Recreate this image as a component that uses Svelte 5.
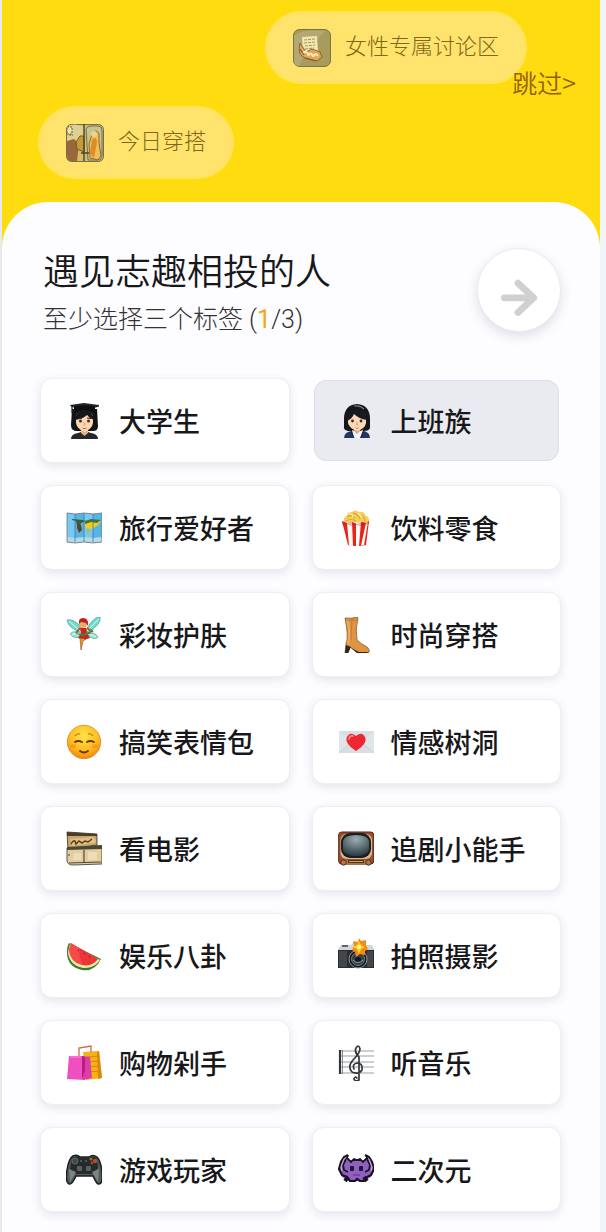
<script>
	const tags = [
		{ icon: 'student', name: '大学生' },
		{ icon: 'office', name: '上班族' },
		{ icon: 'map', name: '旅行爱好者' },
		{ icon: 'popcorn', name: '饮料零食' },
		{ icon: 'fairy', name: '彩妆护肤' },
		{ icon: 'boot', name: '时尚穿搭' },
		{ icon: 'smile', name: '搞笑表情包' },
		{ icon: 'letter', name: '情感树洞' },
		{ icon: 'clapper', name: '看电影' },
		{ icon: 'tv', name: '追剧小能手' },
		{ icon: 'melon', name: '娱乐八卦' },
		{ icon: 'camera', name: '拍照摄影' },
		{ icon: 'bags', name: '购物剁手' },
		{ icon: 'music', name: '听音乐' },
		{ icon: 'gamepad', name: '游戏玩家' },
		{ icon: 'monster', name: '二次元' }
	];

	let selected = $state(['office']);

	function toggle(icon) {
		if (selected.includes(icon)) {
			selected = selected.filter((item) => item !== icon);
		} else {
			selected = [...selected, icon];
		}
	}
</script>

{#snippet drawing(icon)}
	<svg class="icon" viewBox="0 0 36 36" aria-hidden="true">
		{#if icon === 'student'}
			<path d="M6 6h25l1 17q0 5-5 5H11q-6 0-6-6z" fill="#111417" />
			<path d="M5 36q0-5 7-6l3-1h7l3 1q7 1 7 6z" fill="#26272b" />
			<path d="M15 26h7v4l-3.500 3-3.500-3z" fill="#e9b183" />
			<path d="M10 14q0-5 8.500-5T27 14v6q-1 6-8.500 9Q11 26 10 20z" fill="#fbd7b2" />
			<path d="M9 17q0-8 9-9 9 0 10 9-4-1-7-5-4 4-12 5" fill="#15181b" />
			<path d="M4 2l14-2 15 2v1.500L18 8 5 3.500z" fill="#202327" />
			<path d="M8 3.500q10-2 21 0v5q-10-3-21 0z" fill="#0d1013" />
			<path d="M6 3v7" stroke="#222" stroke-width="1.200" />
			<path d="M12 15.500l4-.5M21 15l4 .5" stroke="#3b2116" stroke-width="1" />
			<circle cx="14.500" cy="18" r="1.500" fill="#5c2417" />
			<circle cx="22.500" cy="18" r="1.500" fill="#5c2417" />
			<path d="M18 19l1 3h-1.500" stroke="#d98f60" stroke-width=".8" fill="none" />
			<path d="M16 24.500q2.500 1.500 5 0-2.500 3-5 0" fill="#d62b2b" />
		{:else if icon === 'office'}
			<path d="M6 16Q6 2 19 1q13 1 13 15v9q-1 3-6 3H10q-5-1-4-5z" fill="#14171c" />
			<path d="M6 35q0-6 8-7l5 2 6-2q7 1 7 7z" fill="#26375f" />
			<path d="M14 27l5 2 6-2-3 8h-6z" fill="#f3f5fa" />
			<path d="M16 25h6v3l-3 3-3-3z" fill="#e3a67b" />
			<path d="M10 15q0-7 9-7t9 7v5q-1 6-9 8-8-3-9-8z" fill="#fbd9b9" />
			<path d="M9 18Q9 6 20 6q8 1 9 11-8-1-13-6-2 5-7 7" fill="#171a20" />
			<path d="M16 3q6-1 10 3" stroke="#777b82" stroke-width="1.200" fill="none" />
			<circle cx="14.500" cy="18" r="1.400" fill="#4c2118" />
			<circle cx="23" cy="18" r="1.400" fill="#4c2118" />
			<path d="M19 19v3h1" stroke="#d18b62" stroke-width=".8" fill="none" />
			<path d="M16.500 24q2.500 2 5 0-2.500 3-5 0" fill="#cd382d" />
			<path d="M13 28l3 7M26 28l-3 7" stroke="#152342" stroke-width="1" />
		{:else if icon === 'map'}
			<path d="M1 3l8 1 9-1 9 1 9-1v29l-9 1-9-1-9 1-8-1z" fill="#58b4e5" />
			<path d="M1 3l8 1v29l-8-1zM18 3l9 1v29l-9-1z" fill="#79c8f0" />
			<path d="M1 27l8 1 9-1 9 1 9-1v5l-9 1-9-1-9 1-8-1z" fill="#b7d9e7" />
			<path d="M6 9l11 1 3 1-5 2-1 3-3-1-1-4-4-1z" fill="#3f5c38" />
			<path d="M11 14l4 1 1 5-3 3-2-5z" fill="#5b4321" />
			<path d="M18 13l6-3 11 1-3 4-6 4-6-1z" fill="#f0cc22" />
			<path d="M19 11l6-2 10 1-4 3-6-1-6 2z" fill="#43733b" />
			<path d="M20 19l4 1-2 5z" fill="#bdbb44" />
			<path d="M9 4v28M18 3v29M27 4v28" stroke="#326f9e" stroke-width=".7" />
			<path d="M1 3l8 1 9-1 9 1 9-1v29l-9 1-9-1-9 1-8-1z" fill="none" stroke="#68777d" stroke-width=".8" />
		{:else if icon === 'popcorn'}
			<path d="M6 12Q5 7 9 6q0-4 5-4 3-3 7 0 5-1 6 3 5 2 4 8z" fill="#f5cf57" />
			<path d="M9 7q4-3 8 1M15 3q5 1 7 6M23 5q4 2 4 6M8 11q5-3 10 0" stroke="#d9a13a" stroke-width="1.200" fill="none" />
			<path d="M11 4q3 0 4 3M20 3l4 4" stroke="#fff0a1" stroke-width="1.500" />
			<path d="M4 11l5 2 5-1 5 2 5-2 4 1 3-2-3 24q-10 2-18 0z" fill="#e3251f" />
			<path d="M9 13l5-1 1 24-4-.5zM18 14l5-2-2 24h-3zM28 13l2-1-4 23-3 .5z" fill="#fff8f3" />
			<path d="M4 11l5 2 5-1 5 2 5-2 4 1 3-2-1 4-3-1-4 2-5-1-5 1-5-2-4 1z" fill="#b91518" opacity=".3" />
		{:else if icon === 'fairy'}
			<path d="M17 13Q9 1 1 3q1 8 15 13zM20 13Q28-1 34 0q2 8-13 15z" fill="#74dacb" stroke="#4aac9f" stroke-width=".8" />
			<path d="M16 16Q6 13 4 17q4 6 12 2zM20 16q10-1 12 4-2 4-12-2z" fill="#94e5d6" stroke="#54ac9b" stroke-width=".7" />
			<path d="M3 4l12 11M33 2L21 14M6 17l10-1M30 20l-9-4" stroke="#f3fff4" stroke-width=".8" />
			<path d="M14 11l-4 5M21 11l6 4" stroke="#a85b20" stroke-width="2" />
			<circle cx="17" cy="7" r="4" fill="#f4aa65" />
			<path d="M13 7q-1-6 4-6 6 0 5 8l-2-3-5-1z" fill="#b72320" />
			<path d="M14 11h6l1 5 3 5-6 2-6-2 3-5z" fill="#d1221e" />
			<path d="M9 16l9 1 10-5-4 5-8 2z" fill="#3a8d48" />
			<path d="M14 21l1 12 2-9 3-2z" fill="#ef9a31" stroke="#7e481a" stroke-width=".6" />
		{:else if icon === 'boot'}
			<path d="M7 1q7 1 12-1l1 1q-3 11-1 22 4 4 10 7 4 4 1 6H20L12 30 10 36H7l1-9q3-7-1-26" fill="#df9443" stroke="#8b531f" stroke-width=".8" />
			<path d="M9 2q4 13 1 25" stroke="#edac5e" stroke-width="2" fill="none" />
			<path d="M14 2l-1 21M7 3h12" stroke="#b07232" stroke-width=".7" fill="none" />
			<path d="M8 28l5 2-3 6H7zM13 31l8 4h9l-1 1H19z" fill="#2d251e" />
		{:else if icon === 'smile'}
			<defs>
				<radialGradient id="face" cx=".5" cy=".32" r=".7">
					<stop stop-color="#ffe34d" />
					<stop offset=".6" stop-color="#ffbd20" />
					<stop offset="1" stop-color="#f47f0c" />
				</radialGradient>
			</defs>
			<circle cx="18" cy="18" r="16.700" fill="url(#face)" stroke="#d78211" stroke-width=".7" />
			<path d="M9 12q2-3 5-2M22 10q3-1 5 2" stroke="#b66e0f" stroke-width="1.200" fill="none" />
			<path d="M9 18q3-2 7 0M21 18q3-2 7 0M14 27q4 3 8 0" stroke="#653608" stroke-width="1.800" fill="none" stroke-linecap="round" />
			<ellipse cx="7.500" cy="22" rx="3" ry="2" fill="#ef712c" opacity=".4" />
			<ellipse cx="28.500" cy="22" rx="3" ry="2" fill="#ef712c" opacity=".4" />
		{:else if icon === 'letter'}
			<path d="M1 7h35v22H1z" fill="#d7dfe3" />
			<path d="M1 8l17 13L36 8v20L24 18l-6 5-6-5L1 28z" fill="#dfe5e8" />
			<path d="M1 29l13-11M36 29L23 18" stroke="#c8d1d5" stroke-width=".8" />
			<path d="M18 27Q6 19 9 13q3-6 9-1 6-5 9 1 3 6-9 14" fill="#ee2832" />
			<path d="M11 15q1-4 4-3" stroke="#ff8a85" stroke-width="1.600" fill="none" stroke-linecap="round" />
		{:else if icon === 'clapper'}
			<path d="M1 1l30 2v11L2 19z" fill="#c8a56b" stroke="#3b3020" stroke-width=".8" />
			<path d="M1 1l30 2v2L1 5z" fill="#4a3d29" />
			<path d="M4 8l23-2 3 3-1 3-23 3z" fill="#e0c086" />
			<path d="M5 13q2-4 4-3l1 3 3-3 3 2 3-2 3 1 4-3" stroke="#563d1f" stroke-width="1.500" fill="none" />
			<path d="M1 17l35-2v18l-29 1q-6 0-6-5z" fill="#e3cda1" stroke="#34352a" stroke-width=".8" />
			<path d="M1 16l35-2v4L1 19z" fill="#484a36" />
			<path d="M18 19v13M2 24h2M3 32l32-1" stroke="#4b4b35" stroke-width="1.200" />
			<path d="M8 22h7v7H7zM22 21h9v8h-9z" fill="#eddcb7" />
		{:else if icon === 'tv'}
			<defs>
				<radialGradient id="screen" cx=".5" cy=".2" r=".8">
					<stop stop-color="#9eafb2" />
					<stop offset="1" stop-color="#293c42" />
				</radialGradient>
			</defs>
			<rect x=".7" y="1" width="35" height="32" rx="3" fill="#9a4e30" stroke="#542519" stroke-width="1" />
			<rect x="2.500" y="3" width="31.500" height="25" rx="6" fill="#dfb58b" />
			<rect x="3" y="2" width="30" height="25" rx="9" fill="#18211f" />
			<path d="M5 10q1-6 13-6t13 6v9q-2 6-13 6T5 19z" fill="url(#screen)" />
			<path d="M4 29h28v5H4z" fill="#a67647" />
			<path d="M10 29h16v3H10z" fill="#4c3422" />
			<path d="M11 30.500h14" stroke="#d2a84c" />
			<circle cx="5.500" cy="31.500" r="2.700" fill="#ad7a4d" stroke="#50301e" />
			<circle cx="30.500" cy="31.500" r="2.700" fill="#ad7a4d" stroke="#50301e" />
		{:else if icon === 'melon'}
			<path d="M3 5L35 21q-6 13-19 11Q1 29 1 14 1 8 3 5" fill="#387c39" />
			<path d="M4 6l30 16q-6 9-17 8Q3 27 2 14z" fill="#eee7a0" />
			<path d="M5 5l27 16q-6 8-16 6Q4 24 3 12z" fill="#ed3438" />
			<path d="M5 5l9 6q-2 8 3 15Q4 24 3 12z" fill="#ff6258" opacity=".5" />
			<path d="M12 12l1 1M18 15l1 1M23 18l1 1" stroke="#8c1f26" stroke-width="1.200" />
		{:else if icon === 'camera'}
			<path d="M0 11l3-4h10l3-3h7l3 3h8l2 4v19H0z" fill="#d2d6d9" />
			<path d="M0 12h36v18H0z" fill="#292d31" />
			<path d="M1 13h8v16H1zM29 13h6v16h-6z" fill="#42474a" />
			<path d="M4 7h6v2H4z" fill="#5d6468" />
			<circle cx="20" cy="21" r="9" fill="#121719" stroke="#90989b" stroke-width="1" />
			<circle cx="20" cy="21" r="6.500" fill="#31404a" stroke="#777f83" />
			<circle cx="20" cy="22" r="3" fill="#10171d" />
			<path d="M15 22q5 5 10 0" stroke="#8ea9b6" fill="none" />
			<path d="M21 0l2 3 5-1v5l2 4-3 2v4l-5-1-4 3-1-5-3-2 2-4-1-5 5 1z" fill="#f48b13" />
			<path d="M21 3l2 4 4 2-4 2-2 5-2-5-4-2 4-2z" fill="#ffd52c" />
			<circle cx="21" cy="9" r="2" fill="#fff38b" />
		{:else if icon === 'bags'}
			<path d="M17 7l16-1 3 27-16 2z" fill="#f4b315" />
			<path d="M31 7l2-1 3 27-4 1z" fill="#d98810" />
			<path d="M20 12l13-1M20 17l14-1M20 22l14-1M20 27l15-1" stroke="#e18011" stroke-width="1.100" />
			<path d="M13 12V3l12-2v6" stroke="#d06848" stroke-width="1.300" fill="none" />
			<path d="M3 11h15l1 24-18-1z" fill="#ef4fc0" />
			<path d="M16 11l8 1 2 21-9 2z" fill="#dc3da9" />
			<path d="M16 11l3 1v14l-3 8z" fill="#b5207f" />
			<path d="M4 12h11" stroke="#ff92dc" />
		{:else if icon === 'music'}
			<path d="M2 6h34M2 11h34M2 17h34M2 22h34M2 28h34" stroke="#72777a" stroke-width=".7" />
			<path d="M2 5v24" stroke="#31363b" stroke-width="2.200" />
			<path d="M4.500 5v24" stroke="#596066" stroke-width=".7" />
			<path d="M21 35q-4 2-5-1 1-3 3-1M21 35V12Q16 7 18 3q3-4 4 1 0 4-7 11-6 7-1 12 7 3 10-2 1-7-5-7-5 1-3 6" stroke="#34383b" stroke-width="1.700" fill="none" stroke-linecap="round" />
		{:else if icon === 'gamepad'}
			<path d="M7 4q4-2 7 1h9q4-3 8 0 4 4 5 16 1 11-3 11-2 1-6-8H10q-4 9-7 8-4-2-2-14Q3 6 7 4" fill="#555b5c" stroke="#191d1e" stroke-width="1.500" />
			<path d="M6 6q5-3 9 0h8q4-3 8 1l1 9-6 6H10l-6-5z" fill="#262a2b" />
			<path d="M3 17l7 3-6 10zM33 17l-7 3 6 10z" fill="#7b8383" />
			<circle cx="9" cy="9" r="3" fill="#414748" stroke="#777e7d" stroke-width=".7" />
			<rect x="11" y="14" width="5" height="5" rx="1" fill="#596061" />
			<rect x="20" y="14" width="5" height="5" rx="1" fill="#596061" />
			<circle cx="25" cy="7" r="1.600" fill="#a86342" />
			<circle cx="29" cy="9" r="2.200" fill="#b44e30" />
			<circle cx="26" cy="11" r="1.400" fill="#914b38" />
			<path d="M14 9h2M19 9h2" stroke="#7b8180" />
		{:else}
			<path d="M9 5l3 5h2l2-3 3 2 3-2 2 3h2l3-5 5 5 2 8-3 7-4 2-4 2H12l-4-2-4-2-3-7 2-8z" fill="#9060c0" />
			<path d="M10 25l-3 4M26 25l3 4" stroke="#171321" stroke-width="4" />
			<path d="M10 3L6 5 3 10 1 17l3 6 5 2 3 4h5l2-2 3 2h4l3-4 4-2 3-6-2-7-3-5-4-2" fill="none" stroke="#171321" stroke-width="2.200" />
			<path d="M10 3l-1 3 4 4 3-3 3 1 3-1 3 3 4-4-1-3M8 7l-3 6 1 5 4 2M29 7l3 6-1 5-4 2" fill="none" stroke="#171321" stroke-width="1.800" />
			<path d="M6 7l-3 8 1 4M31 7l3 8-1 4" fill="none" stroke="#c9a6dc" stroke-width="1.200" />
			<rect x="12" y="14" width="4" height="5" rx="1" fill="#211730" />
			<rect x="21" y="14" width="4" height="5" rx="1" fill="#211730" />
			<path d="M15 23h7" stroke="#6b419a" stroke-width="1.500" />
		{/if}
	</svg>
{/snippet}

<main>
	<header>
		<a class="chip right" href="#women">
			<svg viewBox="0 0 38 38" aria-hidden="true">
				<rect x=".5" y=".5" width="37" height="37" rx="6" fill="#a79c5c" stroke="#777345" />
				<path d="M1 7q10-8 31-5L13 23 6 37q-5 0-5-5z" fill="#bbb082" opacity=".6" />
				<path d="M9 8l15-1 1 16-15 1z" fill="#f1e8ad" />
				<path d="M11 11l11-1M11 14l11-1M12 17l10-1M12 20l9-1" stroke="#a39762" stroke-dasharray="3 1" />
				<path d="M7 14q-3 12 5 15l12 3 5-4-2-5-8-3-6 3z" fill="#e1a65d" stroke="#94602f" />
				<path d="M10 25q2-5 5 0M15 27q2-5 5 0M20 28q2-5 5-1" stroke="#fff0b1" stroke-width="2" fill="none" />
				<path d="M7 20l4 6M12 29l11 3" stroke="#8e5227" stroke-width="1.200" />
			</svg>
			<span>女性专属讨论区</span>
		</a>
		<a class="chip" href="#outfit">
			<svg viewBox="0 0 38 38" aria-hidden="true">
				<rect x=".5" y=".5" width="37" height="37" rx="5" fill="#d5bc66" stroke="#756e4b" />
				<path d="M1 3q7-5 17 0v15L1 22z" fill="#dfcf91" />
				<path d="M1 3h5v7H1zM3 11h4" fill="#f0e5b1" stroke="#655d44" stroke-dasharray="2 1" />
				<path d="M1 17l7-2 5 5-2 17H4q-3-1-3-5z" fill="#98673b" />
				<path d="M10 18l4-6h4v16l-7-3z" fill="#c89c34" stroke="#725b26" />
				<path d="M20 5q1-3 5-3h7q4 0 4 4v25q0 5-4 5H22z" fill="#c9c391" stroke="#736f52" />
				<path d="M24 34l-1-14 3-10q4-6 7 0v9l2 13-3 4z" fill="#eebf55" stroke="#8d6a2e" />
				<path d="M26 16q4-5 5 2l-3 16-4-5z" fill="#df8c24" />
				<circle cx="28" cy="10" r="3" fill="#efd28b" />
				<path d="M18 0v37M15 29h8" stroke="#4a4332" stroke-width="1.400" />
			</svg>
			<span>今日穿搭</span>
		</a>
		<a class="skip" href="#home">跳过&gt;</a>
	</header>

	<section>
		<div class="heading">
			<div>
				<h1>遇见志趣相投的人</h1>
				<p>至少选择三个标签 (<b>{selected.length}</b>/3)</p>
			</div>
			<button class="next" aria-label="下一步" disabled={selected.length < 3}>
				<svg viewBox="0 0 84 84" aria-hidden="true">
					<path d="M27 50h29M41 35l16 15-16 15" />
				</svg>
			</button>
		</div>

		<div class="tags">
			{#each tags as tag}
				<button
					class="tag"
					class:selected={selected.includes(tag.icon)}
					aria-pressed={selected.includes(tag.icon)}
					onclick={() => toggle(tag.icon)}
				>
					{@render drawing(tag.icon)}
					<span>{tag.name}</span>
				</button>
			{/each}
		</div>
	</section>
</main>

<style>
	:global(body) {
		margin: 0;
		background: #f1f4f8;
	}
	main {
		margin-right: 6px;
		border-left: 2px solid #e9e9ed;
		background: #ffdc10;
		font-family: 'Noto Sans CJK SC', sans-serif;
	}
	header {
		position: relative;
		display: flex;
		flex-direction: column;
		align-items: flex-start;
		gap: 22px;
		padding: 11px 73px 23px 36px;
	}
	a {
		text-decoration: none;
	}
	.chip {
		display: flex;
		align-items: center;
		gap: 14px;
		box-sizing: border-box;
		height: 73px;
		padding: 0 26px;
		border: 2px solid #ffe458;
		border-radius: 37px;
		background: #ffe36d;
		color: #7d681c;
		font-size: 22px;
		font-weight: 300;
		white-space: nowrap;
	}
	.chip.right {
		align-self: flex-end;
	}
	.chip svg {
		width: 38px;
		height: 38px;
	}
	.chip span {
		padding-bottom: 8px;
	}
	.skip {
		position: absolute;
		top: 64px;
		right: 24px;
		color: #93600c;
		font-size: 25px;
		font-weight: 350;
		line-height: 36px;
	}
	section {
		padding: 44px 39px 20px 38px;
		border-radius: 46px 46px 0 0;
		background: #fdfcff;
	}
	.heading {
		display: flex;
		justify-content: space-between;
		align-items: flex-start;
		margin-bottom: 38px;
	}
	h1 {
		margin: 0;
		color: #17181a;
		font-size: 36px;
		font-weight: 350;
		line-height: 46px;
	}
	p {
		margin: 8px 0 0;
		color: #333336;
		font-family: Roboto, 'Noto Sans CJK SC', sans-serif;
		font-size: 25px;
		font-weight: 300;
		line-height: 40px;
	}
	p b {
		color: #f8a51b;
		font-weight: 400;
	}
	.heading > div {
		padding-left: 3px;
	}
	button {
		font-family: inherit;
		cursor: pointer;
	}
	.next {
		width: 84px;
		height: 84px;
		margin-top: 2px;
		padding: 0;
		border: 1px solid #ececf0;
		border-radius: 50%;
		background: #fff;
		box-shadow: 0 4px 12px rgba(70, 65, 100, 0.16);
	}
	.next svg {
		display: block;
		fill: none;
		stroke: #d0d0d2;
		stroke-width: 7;
		stroke-linecap: round;
		stroke-linejoin: round;
	}
	.tags {
		display: grid;
		grid-template-columns: 1fr 1fr;
		grid-auto-rows: 85px;
		gap: 22px;
	}
	.tag {
		display: flex;
		align-items: center;
		gap: 17px;
		padding: 0 0 0 25px;
		border: 1px solid #eeeef3;
		border-radius: 12px;
		background: #fff;
		box-shadow: 0 3px 10px rgba(60, 55, 90, 0.12);
		color: #18181a;
		font-size: 27px;
		font-weight: 500;
		white-space: nowrap;
	}
	.tag.selected {
		margin: 2px;
		padding-left: 23px;
		border-color: #dcdfe5;
		background: #e9ebf0;
		box-shadow: none;
	}
	.icon {
		width: 36px;
		height: 36px;
	}
</style>
